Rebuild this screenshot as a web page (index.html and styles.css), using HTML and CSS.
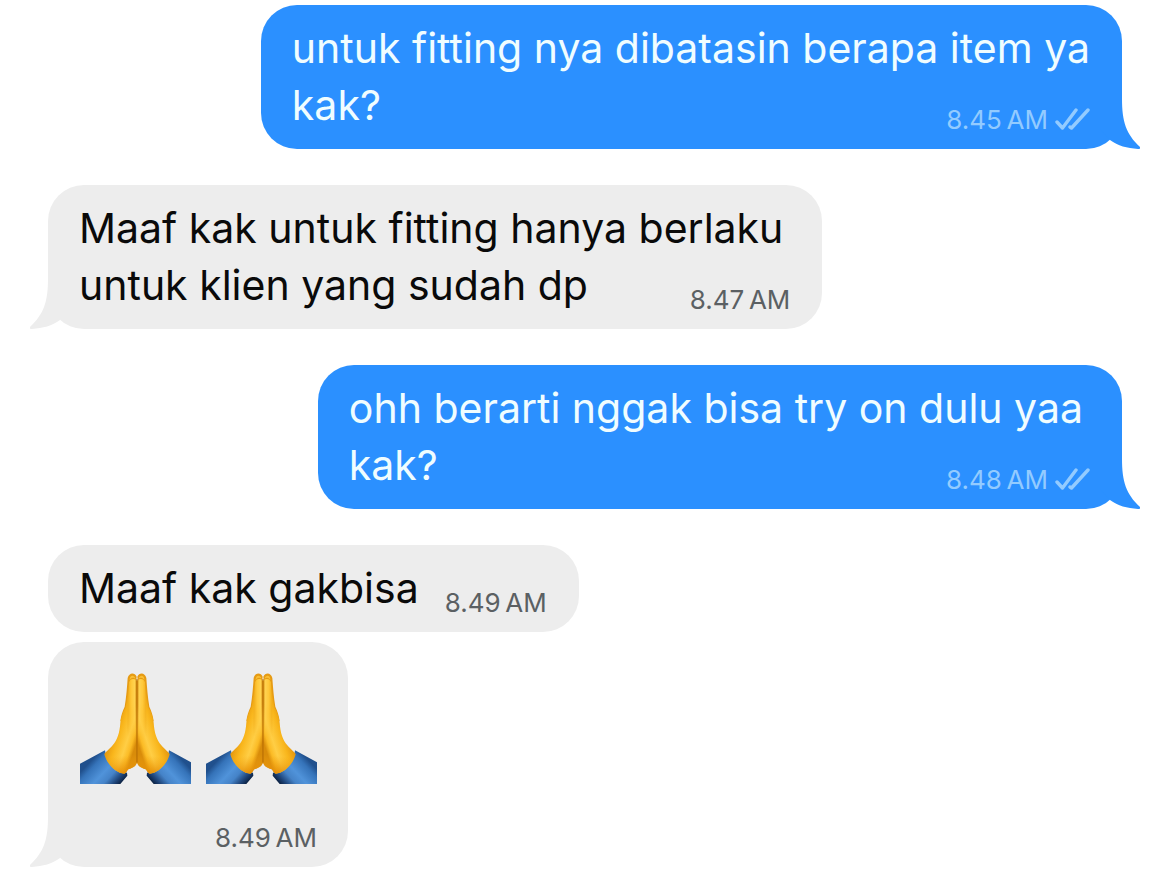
FILE: index.html
```
<!DOCTYPE html>
<html lang="id">
<head>
    <meta charset="UTF-8">
    <meta name="viewport" content="width=device-width, initial-scale=1.0">
    <title>Chat</title>
    <link rel="stylesheet" href="styles.css">
</head>
<body>

<!-- shared shapes -->
<svg class="defs" width="0" height="0" aria-hidden="true">
    <defs>
        <linearGradient id="skin" x1="125" y1="215" x2="201" y2="240" gradientUnits="userSpaceOnUse">
            <stop offset="0" stop-color="#e4960e"/>
            <stop offset=".3" stop-color="#f9b61c"/>
            <stop offset=".65" stop-color="#ffce45"/>
            <stop offset=".85" stop-color="#fbbb25"/>
            <stop offset="1" stop-color="#d98c0a"/>
        </linearGradient>
        <linearGradient id="finger" x1="174" y1="0" x2="202" y2="0" gradientUnits="userSpaceOnUse">
            <stop offset="0" stop-color="#f2ae1c"/>
            <stop offset=".35" stop-color="#ffc83a"/>
            <stop offset=".7" stop-color="#ffd24f"/>
            <stop offset="1" stop-color="#cf8208"/>
        </linearGradient>
        <linearGradient id="fade" x1="0" y1="130" x2="0" y2="230" gradientUnits="userSpaceOnUse">
            <stop offset="0" stop-color="#fff"/>
            <stop offset="1" stop-color="#000"/>
        </linearGradient>
        <mask id="top" maskUnits="userSpaceOnUse" x="100" y="30" width="105" height="320">
            <path fill="url(#fade)" d="M100 30H205V350H100Z"/>
        </mask>
        <linearGradient id="palm" x1="160" y1="285" x2="165" y2="340" gradientUnits="userSpaceOnUse">
            <stop offset="0" stop-color="#f0a010" stop-opacity="0"/>
            <stop offset="1" stop-color="#e48e08"/>
        </linearGradient>
        <linearGradient id="sleeve" x1="80" y1="282" x2="164" y2="360" gradientUnits="userSpaceOnUse">
            <stop offset="0" stop-color="#20508d"/>
            <stop offset=".15" stop-color="#3573b9"/>
            <stop offset=".45" stop-color="#5093da"/>
            <stop offset=".65" stop-color="#4583c8"/>
            <stop offset=".85" stop-color="#1e4377"/>
            <stop offset="1" stop-color="#081b38"/>
        </linearGradient>
        <g id="hand">
            <path fill="url(#sleeve)" d="M25 312L105 269C108 300 132 330 171 336L172 345L151 370H25Z"/>
            <path fill="#e69b14" d="M200 48C194 34 177 35 173 52C171 80 169 108 164 138C158 151 153 164 151 182L185 170Z"/>
            <path fill="url(#skin)" d="M201 62C196 52 180 52 177 65C175 90 171 115 167 140C158 156 153 168 151 186C149 216 142 238 128 254C118 266 106 274 103 281C110 310 139 338 163 339C170 337 171 329 175 326C190 322 201 313 201 303Z"/>
            <path fill="url(#finger)" mask="url(#top)" d="M201 62C196 52 180 52 177 65C175 100 172 145 172 230H201Z"/>
            <path fill="url(#palm)" d="M128 254C118 266 106 274 103 281C110 310 139 338 163 339C170 337 171 329 175 326C190 322 201 313 201 303V255Z"/>
            <path fill="none" stroke="#b86d05" stroke-opacity=".6" stroke-width="3" d="M200 55V306"/>
            <path fill="#f9bf35" d="M179 58C178 43 193 41 196 54C190 49 184 51 179 58Z"/>
        </g>
        <symbol id="pray" viewBox="30 37 333 333">
            <use href="#hand"/>
            <use href="#hand" transform="translate(402 0) scale(-1 1)"/>
        </symbol>
        <symbol id="tail" viewBox="0 0 40 60">
            <path d="M0 0H22V10C22 32 26 45 40 58Q41 60 38 60C27 59 18 57 10 51L0 40Z"/>
        </symbol>
        <symbol id="read" viewBox="0 0 36 26">
            <path fill="none" stroke="currentColor" stroke-width="3.4" stroke-linecap="round" stroke-linejoin="round" d="M3 15L8.5 21L22 3M16 20L17.500 21L34 3"/>
        </symbol>
    </defs>
</svg>

<main class="chat">
    <div class="message out">
        <p class="text">untuk fitting nya dibatasin berapa item ya<br>kak?</p>
        <div class="meta"><time>8.45&#8239;AM</time><svg class="ticks" role="img" aria-label="Read"><use href="#read"/></svg></div>
        <svg class="tail" aria-hidden="true"><use href="#tail"/></svg>
    </div>

    <div class="message in wide">
        <p class="text">Maaf kak untuk fitting hanya berlaku<br>untuk klien yang sudah dp</p>
        <div class="meta"><time>8.47&#8239;AM</time></div>
        <svg class="tail" aria-hidden="true"><use href="#tail"/></svg>
    </div>

    <div class="message out wide">
        <p class="text">ohh berarti nggak bisa try on dulu yaa<br>kak?</p>
        <div class="meta"><time>8.48&#8239;AM</time><svg class="ticks" role="img" aria-label="Read"><use href="#read"/></svg></div>
        <svg class="tail" aria-hidden="true"><use href="#tail"/></svg>
    </div>

    <div class="message in short">
        <p class="text">Maaf kak gakbisa</p>
        <div class="meta"><time>8.49&#8239;AM</time></div>
    </div>

    <div class="message in follow">
        <div class="emojis">
            <svg class="emoji" role="img" aria-label="Folded hands"><use href="#pray"/></svg>
            <svg class="emoji" role="img" aria-label="Folded hands"><use href="#pray"/></svg>
        </div>
        <div class="meta"><time>8.49&#8239;AM</time></div>
        <svg class="tail" aria-hidden="true"><use href="#tail"/></svg>
    </div>
</main>

</body>
</html>
```

FILE: styles.css
```
* {
    box-sizing: border-box;
}
body {
    margin: 0;
    background-color: #fff;
    font-family: Inter, sans-serif;
}
.defs {
    position: absolute;
}
.chat {
    display: flex;
    flex-direction: column;
    gap: 36px;
    padding: 5px 48px 16px;
}
.message {
    position: relative;
    display: grid;
    padding: 15px 32px 15px 31px;
    border-radius: 36px;
}
.in {
    align-self: flex-start;
    background-color: #ededed;
    color: #0a0a0a;
}
.out {
    align-self: flex-end;
    background-color: #2b90ff;
    color: #f0fdff;
}
.text {
    grid-area: 1 / 1;
    margin: 0;
    font-size: 41px;
    line-height: 57px;
}
.wide .text {
    padding-right: 7px;
}
.meta {
    grid-area: 1 / 1;
    align-self: end;
    justify-self: end;
    display: flex;
    align-items: center;
    gap: 6px;
    font-size: 26px;
    line-height: 28px;
    color: #5b6063;
}
.out .meta {
    color: #93cbff;
}
.ticks {
    width: 36px;
    height: 26px;
}
/* time sits on the same line as the text */
.short {
    grid-template-columns: auto auto;
    column-gap: 26px;
}
.short .meta {
    grid-area: 1 / 2;
}
/* next message of the same sender */
.follow {
    margin-top: -26px;
    padding: 31px 31px 15px 32px;
}
.emojis {
    grid-area: 1 / 1;
    display: flex;
    gap: 15px;
    padding-bottom: 68px;
}
.emoji {
    width: 111px;
    height: 111px;
}
.tail {
    position: absolute;
    bottom: 0;
    width: 40px;
    height: 60px;
}
.out .tail {
    right: -18px;
    fill: #2b90ff;
}
.in .tail {
    left: -18px;
    fill: #ededed;
    transform: scaleX(-1);
}
```
